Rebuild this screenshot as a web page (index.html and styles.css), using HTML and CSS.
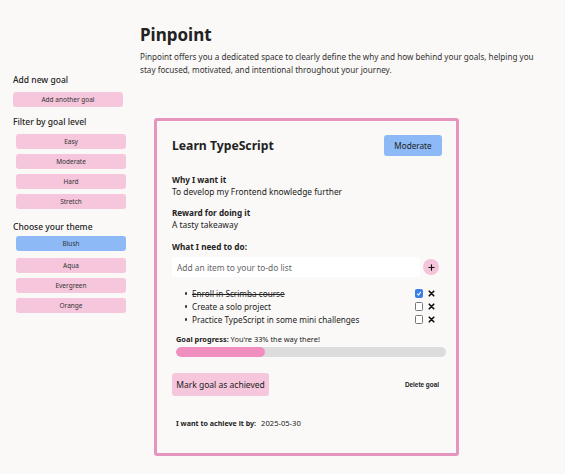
FILE: index.html
```html
<!DOCTYPE html>
<html lang="en">
<head>
<meta charset="utf-8">
<title>Pinpoint</title>
<link rel="stylesheet" href="styles.css">
</head>
<body>
<div class="app">
  <aside class="sidebar">
    <h2 class="side-title">Add new goal</h2>
    <button class="side-btn wide">Add another goal</button>
    <h2 class="side-title">Filter by goal level</h2>
    <div class="btn-stack">
      <button class="side-btn">Easy</button>
      <button class="side-btn">Moderate</button>
      <button class="side-btn">Hard</button>
      <button class="side-btn">Stretch</button>
    </div>
    <h2 class="side-title">Choose your theme</h2>
    <div class="btn-stack theme-stack">
      <button class="side-btn active">Blush</button>
      <button class="side-btn gap-top">Aqua</button>
      <button class="side-btn">Evergreen</button>
      <button class="side-btn">Orange</button>
    </div>
  </aside>
  <main class="main">
    <h1 class="title">Pinpoint</h1>
    <p class="intro">Pinpoint offers you a dedicated space to clearly define the why and how behind your goals, helping you stay focused, motivated, and intentional throughout your journey.</p>
    <section class="card">
      <div class="card-head">
        <h2 class="goal-title">Learn TypeScript</h2>
        <button class="level-btn">Moderate</button>
      </div>
      <div class="field">
        <h3 class="label">Why I want it</h3>
        <p class="value">To develop my Frontend knowledge further</p>
      </div>
      <div class="field">
        <h3 class="label">Reward for doing it</h3>
        <p class="value">A tasty takeaway</p>
      </div>
      <h3 class="label todo-label">What I need to do:</h3>
      <div class="add-row">
        <input class="add-input" type="text" placeholder="Add an item to your to-do list">
        <button class="add-btn" aria-label="Add item"><svg viewBox="0 0 10 10" width="7" height="7"><path d="M5 1.2V8.8M1.2 5H8.8" stroke="#111" stroke-width="1.6" stroke-linecap="round"/></svg></button>
      </div>
      <ul class="todo-list">
        <li class="todo done"><span class="todo-text">Enroll in Scrimba course</span><input type="checkbox" class="check" checked><button class="del" aria-label="Remove"><svg viewBox="0 0 10 10" width="7" height="7"><path d="M1.8 1.8L8.2 8.2M8.2 1.8L1.8 8.2" stroke="#111" stroke-width="2.4" stroke-linecap="round"/></svg></button></li>
        <li class="todo"><span class="todo-text">Create a solo project</span><input type="checkbox" class="check"><button class="del" aria-label="Remove"><svg viewBox="0 0 10 10" width="7" height="7"><path d="M1.8 1.8L8.2 8.2M8.2 1.8L1.8 8.2" stroke="#111" stroke-width="2.4" stroke-linecap="round"/></svg></button></li>
        <li class="todo"><span class="todo-text">Practice TypeScript in some mini challenges</span><input type="checkbox" class="check"><button class="del" aria-label="Remove"><svg viewBox="0 0 10 10" width="7" height="7"><path d="M1.8 1.8L8.2 8.2M8.2 1.8L1.8 8.2" stroke="#111" stroke-width="2.4" stroke-linecap="round"/></svg></button></li>
      </ul>
      <p class="progress-label"><strong>Goal progress:</strong> You're 33% the way there!</p>
      <div class="progress"><div class="progress-fill" style="width:33%"></div></div>
      <div class="actions">
        <button class="achieve-btn">Mark goal as achieved</button>
        <button class="delete-btn">Delete goal</button>
      </div>
      <p class="deadline"><strong class="deadline-label">I want to achieve it by:</strong><span class="date">2025-05-30</span></p>
    </section>
  </main>
</div>
</body>
</html>
```

FILE: styles.css
```css
* { box-sizing: border-box; }
html, body { margin: 0; padding: 0; }
body {
  background: #faf9f7;
  color: #222;
  font-family: "Noto Sans", "Open Sans", sans-serif;
  width: 565px;
  height: 474px;
  overflow: hidden;
}
button { font-family: inherit; cursor: pointer; }
h1, h2, h3, p, ul { margin: 0; }

.app {
  display: grid;
  grid-template-columns: 140px 1fr;
}

.sidebar {
  padding: 74px 14px 0 13px;
  display: flex;
  flex-direction: column;
}
.side-title {
  font-size: 8.5px;
  font-weight: 500;
  line-height: 12px;
  color: #222;
}
.sidebar .wide { margin: 6px 0 9px 0; width: 110px; }
.btn-stack {
  display: flex;
  flex-direction: column;
  gap: 5px;
  padding-left: 3px;
  margin: 6px 0 12px;
}
.theme-stack { margin-top: 3px; }
.side-btn {
  height: 15px;
  width: 110px;
  border: none;
  border-radius: 3px;
  background: #f5c6dc;
  color: #333;
  font-size: 6.5px;
  line-height: 15px;
  padding: 0;
}
.side-btn.active { background: #8dbaf6; }
.side-btn.gap-top { margin-top: 2px; }

.main {
  padding-top: 24px;
}
.title {
  font-size: 17px;
  font-weight: 700;
  line-height: 22px;
  color: #222;
}
.intro {
  margin-top: 4px;
  font-size: 8.13px;
  line-height: 13px;
  color: #333;
  width: 402px;
}

.card {
  margin: 42px 0 0 14px;
  width: 305px;
  height: 338px;
  border: 3px solid #e695be;
  border-radius: 3px;
  background: #faf9f7;
  padding: 14px 14px 0 15px;
}
.card-head {
  display: flex;
  justify-content: space-between;
  align-items: center;
  height: 21px;
}
.goal-title {
  font-size: 12.2px;
  font-weight: 700;
  color: #222;
}
.level-btn {
  width: 58px;
  height: 21px;
  border: none;
  border-radius: 3px;
  background: #8dbaf6;
  color: #222;
  font-size: 8.2px;
  padding: 0;
}
.field { margin-top: 18px; }
.field + .field { margin-top: 9px; }
.label {
  font-size: 8.2px;
  font-weight: 700;
  line-height: 12px;
}
.value {
  font-size: 8.4px;
  line-height: 12px;
}
.todo-label { margin-top: 10px; }

.add-row {
  margin-top: 4px;
  display: flex;
  align-items: center;
  gap: 3px;
}
.add-input {
  width: 248px;
  height: 20px;
  border: none;
  border-radius: 2px;
  background: #ffffff;
  font-family: inherit;
  font-size: 8.4px;
  padding: 0 5px;
  outline: none;
}
.add-input::placeholder { color: #666; }
.add-btn {
  width: 16px;
  height: 16px;
  border-radius: 50%;
  border: none;
  background: #f3c4da;
  padding: 0;
  display: flex;
  align-items: center;
  justify-content: center;
}

.todo-list {
  margin-top: 10px;
  padding: 0 7px 0 13px;
  list-style: none;
}
.todo {
  display: flex;
  align-items: center;
  font-size: 8.2px;
  line-height: 13px;
}
.todo::before {
  content: "";
  width: 2.4px;
  height: 2.4px;
  border-radius: 50%;
  background: #333;
  margin: 0 4.6px 0 0;
  flex: none;
}
.todo-text { flex: 1; }
.todo.done .todo-text { text-decoration: line-through; }
.check {
  appearance: none;
  -webkit-appearance: none;
  width: 8.5px;
  height: 8.5px;
  margin: 0;
  border: 1px solid #777;
  border-radius: 1.5px;
  background: #fff;
  flex: none;
}
.check:checked {
  border-color: #3a7ee8;
  background: #3a7ee8 url("data:image/svg+xml;utf8,<svg xmlns='http://www.w3.org/2000/svg' viewBox='0 0 10 10'><path d='M2 5.2L4.1 7.3L8 2.8' fill='none' stroke='white' stroke-width='1.6'/></svg>") center/100% no-repeat;
}
.del {
  border: none;
  background: none;
  padding: 0;
  margin-left: 5px;
  width: 7px;
  height: 7px;
  display: flex;
  flex: none;
}

.progress-label {
  margin: 7px 0 0 4px;
  font-size: 7.4px;
  line-height: 12px;
}
.progress {
  margin: 2px -4px 0 4px;
  height: 10px;
  border-radius: 5px;
  background: #dcdcdc;
  overflow: hidden;
}
.progress-fill {
  height: 100%;
  background: #f08fbf;
  border-radius: 5px;
}

.actions {
  margin-top: 16px;
  display: flex;
  justify-content: space-between;
  align-items: center;
  padding-right: 3px;
}
.achieve-btn {
  width: 97px;
  height: 23px;
  border: none;
  border-radius: 3px;
  background: #f5c6dc;
  color: #222;
  font-size: 8.5px;
  padding: 0;
}
.delete-btn {
  border: none;
  background: none;
  font-family: "Liberation Sans", Arial, sans-serif;
  font-weight: 700;
  font-size: 6.4px;
  color: #222;
  padding: 0;
}

.deadline {
  margin: 21px 0 0 4px;
  font-size: 7.6px;
  line-height: 12px;
}
.deadline-label { font-size: 7.1px; }
.date { margin-left: 5px; }
```
